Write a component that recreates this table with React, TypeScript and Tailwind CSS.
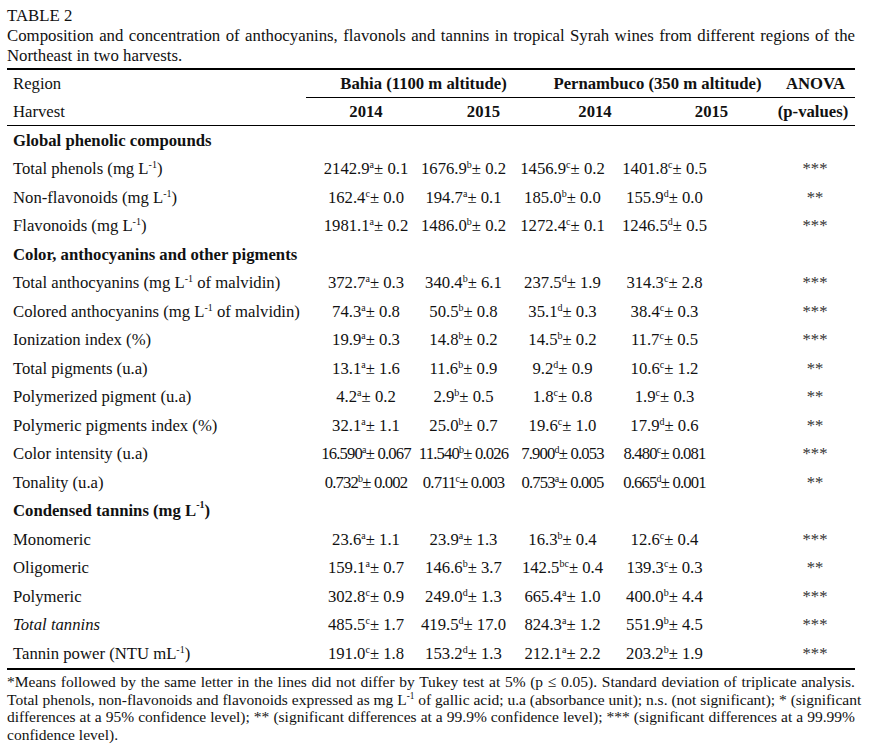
import React from 'react';

type Row =
  | { kind: 'section'; label: React.ReactNode }
  | { kind: 'data'; label: React.ReactNode; values: [string, string, string][]; anova: string };

function Sup({ children }: { children: React.ReactNode }) {
  return <sup className="text-[0.6em] align-baseline relative top-[-0.6em]">{children}</sup>;
}

const mgL = (
  <>
    mg L<Sup>-1</Sup>
  </>
);

const rows: Row[] = [
  { kind: 'section', label: 'Global phenolic compounds' },
  { kind: 'data', label: <>Total phenols ({mgL})</>, values: [['2142.9', 'a', '0.1'], ['1676.9', 'b', '0.2'], ['1456.9', 'c', '0.2'], ['1401.8', 'c', '0.5']], anova: '***' },
  { kind: 'data', label: <>Non-flavonoids ({mgL})</>, values: [['162.4', 'c', '0.0'], ['194.7', 'a', '0.1'], ['185.0', 'b', '0.0'], ['155.9', 'd', '0.0']], anova: '**' },
  { kind: 'data', label: <>Flavonoids ({mgL})</>, values: [['1981.1', 'a', '0.2'], ['1486.0', 'b', '0.2'], ['1272.4', 'c', '0.1'], ['1246.5', 'd', '0.5']], anova: '***' },
  { kind: 'section', label: 'Color, anthocyanins and other pigments' },
  { kind: 'data', label: <>Total anthocyanins ({mgL} of malvidin)</>, values: [['372.7', 'a', '0.3'], ['340.4', 'b', '6.1'], ['237.5', 'd', '1.9'], ['314.3', 'c', '2.8']], anova: '***' },
  { kind: 'data', label: <>Colored anthocyanins ({mgL} of malvidin)</>, values: [['74.3', 'a', '0.8'], ['50.5', 'b', '0.8'], ['35.1', 'd', '0.3'], ['38.4', 'c', '0.3']], anova: '***' },
  { kind: 'data', label: 'Ionization index (%)', values: [['19.9', 'a', '0.3'], ['14.8', 'b', '0.2'], ['14.5', 'b', '0.2'], ['11.7', 'c', '0.5']], anova: '***' },
  { kind: 'data', label: 'Total pigments (u.a)', values: [['13.1', 'a', '1.6'], ['11.6', 'b', '0.9'], ['9.2', 'd', '0.9'], ['10.6', 'c', '1.2']], anova: '**' },
  { kind: 'data', label: 'Polymerized pigment (u.a)', values: [['4.2', 'a', '0.2'], ['2.9', 'b', '0.5'], ['1.8', 'c', '0.8'], ['1.9', 'c', '0.3']], anova: '**' },
  { kind: 'data', label: 'Polymeric pigments index (%)', values: [['32.1', 'a', '1.1'], ['25.0', 'b', '0.7'], ['19.6', 'c', '1.0'], ['17.9', 'd', '0.6']], anova: '**' },
  { kind: 'data', label: 'Color intensity (u.a)', values: [['16.590', 'a', '0.067'], ['11.540', 'b', '0.026'], ['7.900', 'd', '0.053'], ['8.480', 'c', '0.081']], anova: '***' },
  { kind: 'data', label: 'Tonality (u.a)', values: [['0.732', 'b', '0.002'], ['0.711', 'c', '0.003'], ['0.753', 'a', '0.005'], ['0.665', 'd', '0.001']], anova: '**' },
  { kind: 'section', label: <>Condensed tannins ({mgL})</> },
  { kind: 'data', label: 'Monomeric', values: [['23.6', 'a', '1.1'], ['23.9', 'a', '1.3'], ['16.3', 'b', '0.4'], ['12.6', 'c', '0.4']], anova: '***' },
  { kind: 'data', label: 'Oligomeric', values: [['159.1', 'a', '0.7'], ['146.6', 'b', '3.7'], ['142.5', 'bc', '0.4'], ['139.3', 'c', '0.3']], anova: '**' },
  { kind: 'data', label: 'Polymeric', values: [['302.8', 'c', '0.9'], ['249.0', 'd', '1.3'], ['665.4', 'a', '1.0'], ['400.0', 'b', '4.4']], anova: '***' },
  { kind: 'data', label: <i>Total tannins</i>, values: [['485.5', 'c', '1.7'], ['419.5', 'd', '17.0'], ['824.3', 'a', '1.2'], ['551.9', 'b', '4.5']], anova: '***' },
  { kind: 'data', label: <>Tannin power (NTU mL<Sup>-1</Sup>)</>, values: [['191.0', 'c', '1.8'], ['153.2', 'd', '1.3'], ['212.1', 'a', '2.2'], ['203.2', 'b', '1.9']], anova: '***' },
];

const valueWidths = ['w-[96px]', 'w-[99px]', 'w-[99px]', 'w-[105px]'];

export default function App() {
  return (
    <div className="bg-white w-[890px] h-[750px] text-[#111] font-['Liberation_Serif','Times_New_Roman',serif]">
      <div className="px-[7px] pt-[6px] w-[862px]">
        {/* Caption */}
        <div className="text-[16.8px] leading-[20px]">
          <div>TABLE 2</div>
          <div className="text-justify [text-align-last:justify] whitespace-nowrap">
            Composition and concentration of anthocyanins, flavonols and tannins in tropical Syrah wines from different regions of the
          </div>
          <div>Northeast in two harvests.</div>
        </div>

        {/* Table */}
        <div className="mt-[2px] text-[16.7px]">
          <div className="h-[2px] bg-black" />
          <div className="flex h-[27px] items-center font-bold">
            <div className="w-[311px] pl-[6px] font-normal">Region</div>
            <div className="w-[211px] flex justify-center whitespace-nowrap">Bahia (1100 m altitude)</div>
            <div className="w-[257px] flex justify-center whitespace-nowrap">Pernambuco (350 m altitude)</div>
            <div className="w-[59px] flex justify-center">ANOVA</div>
          </div>
          <div className="ml-[299px] h-px bg-black" />
          <div className="flex h-[27px] items-center font-bold">
            <div className="w-[311px] pl-[6px] font-normal">Harvest</div>
            <div className="w-[96px] flex justify-center">2014</div>
            <div className="w-[139px] flex justify-center">2015</div>
            <div className="w-[84px] flex justify-center">2014</div>
            <div className="w-[149px] flex justify-center">2015</div>
            <div className="w-[54px] flex justify-center whitespace-nowrap">(p-values)</div>
          </div>
          <div className="h-px bg-black" />

          {rows.map((row, i) =>
            row.kind === 'section' ? (
              <div key={i} className="flex h-[28.5px] items-center pl-[6px] font-bold">
                {row.label}
              </div>
            ) : (
              <div key={i} className="flex h-[28.5px] items-center">
                <div className="w-[311px] pl-[6px] whitespace-nowrap">{row.label}</div>
                {row.values.map(([v, l, sd], j) => (
                  <div key={j} className={`${valueWidths[j]} flex justify-center whitespace-nowrap`}>
                    <span className={v.length + sd.length > 9 ? 'tracking-[-0.05em]' : ''}>
                      {v}
                      <Sup>{l}</Sup>± {sd}
                    </span>
                  </div>
                ))}
                <div className="w-[58px]" />
                <div className="w-[80px] flex justify-center text-[#333]">{row.anova}</div>
              </div>
            )
          )}
          <div className="h-[2.5px] bg-black" />
        </div>

        {/* Footnote */}
        <div className="mt-[3px] text-[15.5px] leading-[17.5px]">
          <div className="text-justify [text-align-last:justify] whitespace-nowrap">
            *Means followed by the same letter in the lines did not differ by Tukey test at 5% (p ≤ 0.05). Standard deviation of triplicate analysis.
          </div>
          <div className="text-justify [text-align-last:justify] whitespace-nowrap">
            Total phenols, non-flavonoids and flavonoids expressed as {mgL} of gallic acid; u.a (absorbance unit); n.s. (not significant); * (significant
          </div>
          <div className="text-justify [text-align-last:justify] whitespace-nowrap">
            differences at a 95% confidence level); ** (significant differences at a 99.9% confidence level); *** (significant differences at a 99.99%
          </div>
          <div>confidence level).</div>
        </div>
      </div>
    </div>
  );
}
